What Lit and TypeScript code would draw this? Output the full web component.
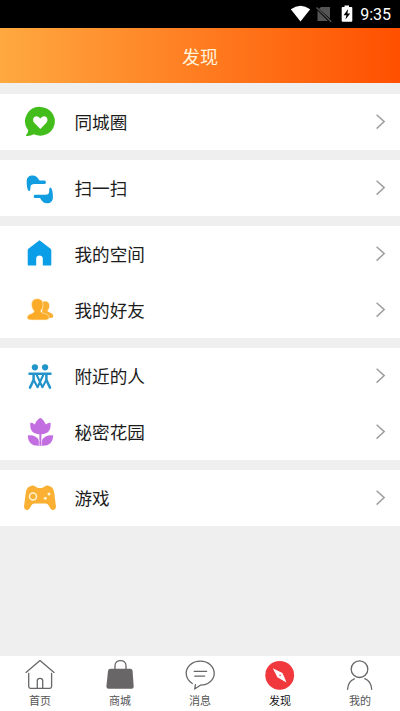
import { LitElement, html, svg, css } from "lit";
import { customElement } from "lit/decorators.js";
import { classMap } from "lit/directives/class-map.js";

const scanHand = "M6.4 20.7C4.9 18 4.7 15 4.7 11.2C4.7 7.4 7.2 5.4 10.6 5.4C13.6 5.4 15.2 6.8 16.6 9.2L17.6 10.6H22.6Q23.9 10.6 23.9 12.2Q23.9 13.9 22.6 13.9H12.2Q9 14 8.6 16.2L8.2 20Q7.6 21.6 6.4 20.7Z";

const icons = {
  circle: svg`
    <path fill="#43bd1c" d="M18.5 2.9a14.5 14.4 0 1 1-6.6 27.3q-3.5 2-7.2 1.8q-1.3-.5-.3-1.5q1.6-1.2 1.8-4.3A14.5 14.4 0 0 1 18.5 2.9Z"/>
    <path fill="#fff" d="M18.3 25L12 18.6C9.3 15 13 10.6 16.6 13L18.3 14.6L20 13C23.6 10.6 27.3 15 24.6 18.6Z"/>`,
  scan: svg`
    <path fill="#119de0" d=${scanHand}/>
    <path fill="#119de0" transform="rotate(180 17.8 19.3)" d=${scanHand}/>`,
  space: svg`
    <path fill="#0b9ee8" d="M17.5 4.3L28.6 12.8Q29.3 13.4 29.3 14.4V28.4Q29.3 29.6 28.1 29.6H20.8V22.4Q20.3 19.6 17.5 19.6Q14.7 19.6 14.2 22.4V29.6H6.9Q5.7 29.6 5.7 28.4V14.4Q5.7 13.4 6.4 12.8Z"/>`,
  friends: svg`
    <path fill="#fbb034" d="M20.5 9.9C22.4 8.7 26.8 9 27.2 12.4C27.8 15.3 26.8 17.1 25.4 18.6C25.4 20.7 31.3 20.6 31.3 24.2Q31.3 25.9 29 25.9H20Z"/>
    <path fill="#fbab27" stroke="#fff2d2" stroke-width=".6" d="M15.3 6.8C19.2 6.8 21.1 9 21 12.4C21 15.2 20 17.2 18.8 18.8C18.4 22 27.2 21.2 27.2 25.4Q27.2 28 22 28H10.2Q5.2 28 5.2 25.4C5.2 21.4 12.8 22 12 18.8C10.5 17.2 9.6 15.3 9.6 12.4C9.6 8.7 11.6 6.8 15.3 6.8Z"/>`,
  nearby: svg`
    <g fill="#2394ca"><circle cx="12.9" cy="9.3" r="3.1"/><circle cx="23.1" cy="9.3" r="3.1"/></g>
    <path fill="none" stroke="#2394ca" stroke-width="2.5" stroke-linecap="round" stroke-linejoin="round" d="M7.5 15.7H28.5M11.6 16V22L8 29.6M24.4 16V22L28 29.6"/>
    <path fill="none" stroke="#2394ca" stroke-width="2.1" stroke-linecap="round" stroke-linejoin="round" d="M12 22.5L15.6 29.2L21.2 17M24 22.5L20.4 29.2L14.8 17"/>`,
  garden: svg`
    <path fill="#c26ee0" d="M8.3 8.8Q11 8.5 12.8 10.5Q14.5 5.7 18.4 3.8Q22 5.7 24 10.5Q25.8 8.5 28.6 8.8Q29.5 19.8 19.4 20.3V27.2Q22.4 20.6 31.3 21.4Q30.8 31.7 21 31.7H16Q6 31.7 5.7 21.4Q14.5 20.6 17.4 27.2V20.3Q7.2 19.8 8.3 8.8Z"/>
    <path stroke="#fff" stroke-width=".6" d="M17.2 26V31.7M19.6 26V31.7"/>`,
  games: svg`
    <path fill="#fbb034" d="M7.7 6.5Q11.7 4 14.4 7.2Q18 9 21.6 7.2Q24.3 4 28.3 6.5Q31.7 7.4 32.4 14L34 26.8Q33.7 30.3 30.3 29.9Q28.5 29.5 26.8 25.8Q25.7 23.5 23.4 23.5H12.6Q10.3 23.5 9.2 25.8Q7.5 29.5 5.7 29.9Q2.3 30.3 2 26.8L3.6 14Q4.3 7.4 7.7 6.5Z"/>
    <circle cx="11" cy="16.4" r="3.5" fill="#fbb034" stroke="#fff4cf" stroke-width="1.5"/>
    <g fill="#fff4cf"><circle cx="27" cy="13.9" r="1.5"/><circle cx="23.3" cy="18.3" r="1.5"/></g>`,
};

const tabIcons = {
  home: svg`<path d="M2 13.4L16 1.6L30 13.4M4.7 14.5V27.6Q4.7 29.3 6.4 29.3H25.9Q27.6 29.3 27.6 27.6V14.5M13.3 29V21.6Q13.3 19.4 16 19.4Q18.7 19.4 18.7 21.6V29"/>`,
  shop: svg`<path fill="#696667" stroke="none" d="M6.4 9.8H26.2Q28.3 9.8 28.6 12L29.7 27.6Q29.7 29.8 27.6 29.8H4.6Q2.4 29.8 2.4 27.6L4 12Q4.3 9.8 6.4 9.8Z"/><path d="M11 11V6.8C11 -.2 22 -.2 22 6.8V11"/>`,
  message: svg`<path d="M8.3 24.5C4.5 22 2.2 18.3 2.2 14.3C2.2 7.5 8.2 2.2 16.3 2.2S30.2 7.5 30.2 14.3S24.2 26.2 16.3 26.2L10.7 30L11.4 25.7M10.2 12.3H22.6M10.8 17.2H20.6"/>`,
  discover: svg`<circle cx="15.7" cy="16.3" r="14.4" fill="#f0383d" stroke="none"/><path fill="#fff" stroke="none" d="M8.8 9.3L18.4 14Q20.6 18.5 22.4 23.4L13.4 18.2Z"/><circle cx="16.1" cy="16.2" r=".8" fill="#f0383d" stroke="none"/>`,
  me: svg`<circle cx="15.5" cy="10.2" r="8.3"/><path d="M3.6 30.3Q4 22.2 10.3 19.8M20.8 19.6Q27.2 22.2 27.7 30.3"/>`,
};

type IconName = keyof typeof icons;
type TabName = keyof typeof tabIcons;

const groups: { icon: IconName; label: string }[][] = [
  [{ icon: "circle", label: "同城圈" }],
  [{ icon: "scan", label: "扫一扫" }],
  [{ icon: "space", label: "我的空间" }, { icon: "friends", label: "我的好友" }],
  [{ icon: "nearby", label: "附近的人" }, { icon: "garden", label: "秘密花园" }],
  [{ icon: "games", label: "游戏" }],
];

const tabs: { icon: TabName; label: string; active?: boolean }[] = [
  { icon: "home", label: "首页" },
  { icon: "shop", label: "商城" },
  { icon: "message", label: "消息" },
  { icon: "discover", label: "发现", active: true },
  { icon: "me", label: "我的" },
];

@customElement("app-root")
export class AppRoot extends LitElement {
  static styles = css`
    :host {
      display: flex;
      flex-direction: column;
      height: 711px;
      background: #efefef;
      font-family: "Noto Sans CJK SC", sans-serif;
      overflow: hidden;
    }
    svg { display: block; flex: none; }
    .status {
      height: 28px;
      flex: none;
      background: #000;
      color: #fff;
      display: flex;
      align-items: center;
      justify-content: flex-end;
      box-sizing: border-box;
      padding-right: 9px;
    }
    .time { font: 400 16px/28px Roboto, sans-serif; margin-left: 6px; padding-top: 1px; }
    .title {
      height: 55px;
      flex: none;
      background: linear-gradient(90deg, #ffa940, #ff5000);
      color: #fff3dc;
      font-size: 18px;
      line-height: 56px;
      text-align: center;
    }
    .list { flex: 1; display: flex; flex-direction: column; gap: 10.5px; padding-top: 11px; }
    .group { background: #fff; }
    .row { height: 55.7px; display: flex; align-items: center; padding: 0 14px 0 22px; }
    .row svg { margin-top: 0.5px; }
    .label { flex: 1; margin: 0.5px 0 0 16.5px; font-size: 17.6px; line-height: 26px; color: #1c1c1c; }
    .tabs { height: 55.5px; flex: none; display: flex; background: #fff; }
    .tab { flex: 1; display: flex; flex-direction: column; align-items: center; padding-top: 3.5px; color: #555; }
    .tab svg { fill: none; stroke: #696667; stroke-width: 1.3; stroke-linecap: round; stroke-linejoin: round; }
    .tab-label { font-size: 11px; line-height: 18px; }
    .active { color: #111; }
  `;

  render() {
    return html`
      <header class="status">
        <svg width="64" height="28" viewBox="0 0 64 28">
          <path fill="#fff" d="M.8 9.2Q10.5 2.2 20.2 9.2L10.5 21.5Z"/>
          <path fill="#555" d="M31 7H40V18.5L29 8.8ZM27.5 10.5L38 21H27.5Z"/>
          <path stroke="#555" stroke-width="1.4" d="M26.5 7.5L41.2 21.8"/>
          <path fill="#fff" d="M54.5 5.5H59V7H61.5Q62.3 7 62.3 8V20.7Q62.3 21.8 61.3 21.8H52.7Q51.7 21.8 51.7 20.7V8Q51.7 7 52.5 7H54.5Z"/>
          <path fill="#000" d="M58.2 9L53.6 15.2H56.4L55.5 19.5L60.2 13.4H57.4Z"/>
        </svg>
        <span class="time">9:35</span>
      </header>
      <div class="title">发现</div>
      <main class="list">
        ${groups.map((group) => html`
          <section class="group">
            ${group.map((item) => html`
              <div class="row">
                <svg width="36" height="36" viewBox="0 0 36 36">${icons[item.icon]}</svg>
                <span class="label">${item.label}</span>
                <svg width="12" height="18" viewBox="0 0 12 18">
                  <path fill="none" stroke="#a0a0a0" stroke-width="1.5" d="M2.6 1.7L10.2 8.6L2.6 15.6"/>
                </svg>
              </div>`)}
          </section>`)}
      </main>
      <nav class="tabs">
        ${tabs.map((tab) => html`
          <div class=${classMap({ tab: true, active: !!tab.active })}>
            <svg width="32" height="32" viewBox="0 0 32 32">${tabIcons[tab.icon]}</svg>
            <span class="tab-label">${tab.label}</span>
          </div>`)}
      </nav>`;
  }
}
